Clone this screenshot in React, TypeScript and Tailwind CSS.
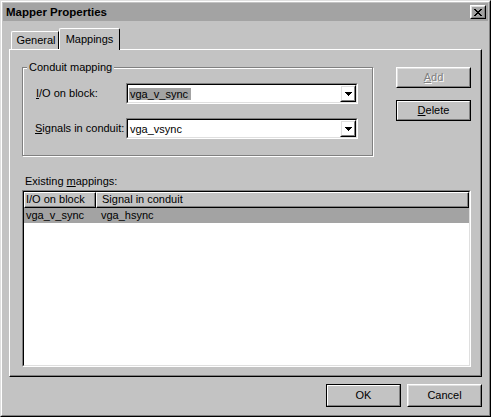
import React from "react";

type Kids = { children?: React.ReactNode };

const closeRows = ["XX....XX", ".XX..XX.", "..XXXX..", "...XX...", "..XXXX..", ".XX..XX.", "XX....XX"];

const CloseGlyph = () => (
  <svg width="8" height="7" shapeRendering="crispEdges">
    {closeRows.flatMap((row, y) =>
      row.split("").map((c, x) =>
        c === "X" ? <rect key={`${x}-${y}`} x={x} y={y} width="1" height="1" fill="#000" /> : null
      )
    )}
  </svg>
);

const Arrow = () => (
  <svg width="7" height="4" shapeRendering="crispEdges">
    <rect x="0" y="0" width="7" height="1" fill="#000" />
    <rect x="1" y="1" width="5" height="1" fill="#000" />
    <rect x="2" y="2" width="3" height="1" fill="#000" />
    <rect x="3" y="3" width="1" height="1" fill="#000" />
  </svg>
);

// raised 3d frame, windows classic style
const Raised = ({ children, className = "" }: Kids & { className?: string }) => (
  <div className={`border border-white border-r-black border-b-black ${className}`}>
    <div className="flex h-full w-full items-center justify-center border border-[#dfdfdf] border-r-[#808080] border-b-[#808080]">
      {children}
    </div>
  </div>
);

const DefaultBtn = ({ children, className = "" }: Kids & { className?: string }) => (
  <div className={`border border-black ${className}`}>
    <div className="flex h-full w-full items-center justify-center border border-white border-r-[#808080] border-b-[#808080]">
      {children}
    </div>
  </div>
);

const U = ({ children }: Kids) => <span className="underline underline-offset-[1px]">{children}</span>;

const Combo = ({ value, selected }: { value: string; selected?: boolean }) => (
  <div className="flex h-[21px] w-[232px] border border-[#808080] border-r-white border-b-white">
    <div className="flex flex-1 items-center border border-black border-r-[#dfdfdf] border-b-[#dfdfdf] bg-white pl-px">
      <span className={selected ? "bg-[#a3a3a3] pl-px pr-[3px] leading-[12px]" : "pl-px leading-[12px]"}>{value}</span>
      <Raised className="ml-auto h-full w-[16px]">
        <Arrow />
      </Raised>
    </div>
  </div>
);

export default function App() {
  return (
    <div className="h-[417px] w-[491px] border border-[#dfdfdf] border-r-black border-b-black bg-[#c3c3c3] font-['Liberation_Sans',Arial,sans-serif] text-[11px] leading-[13px] text-black">
      <div className="flex h-full flex-col border border-white border-r-[#808080] border-b-[#808080] p-px">
        <div className="flex h-[18px] items-center justify-between bg-[#a3a3a3] pl-[3px] pr-[2px]">
          <span className="text-[11.5px] font-bold">Mapper Properties</span>
          <Raised className="h-[14px] w-[16px]">
            <CloseGlyph />
          </Raised>
        </div>

        <div className="flex flex-1 flex-col px-[6px]">
          <div className="mt-[8px] flex h-[20px] items-end pl-[2px]">
            <div className="flex h-[18px] w-[48px] items-center justify-center rounded-tl-[2px] border-t border-l border-r border-white border-r-black pb-px pl-[2px]">
              General
            </div>
            <div className="relative z-10 -mb-px flex h-[22px] w-[61px] items-start justify-center rounded-t-[2px] border-t border-l border-r border-white border-r-black bg-[#c3c3c3] pt-[4px]">
              Mappings
            </div>
          </div>

          <div className="flex h-[328px] flex-col border border-white border-r-black border-b-black pl-[12px] pr-[10px] pt-[17px] shadow-[inset_-1px_-1px_0_#808080]">
            <div className="flex">
              <div className="relative h-[89px] w-[351px] border border-[#808080] shadow-[inset_1px_1px_0_#fff,1px_1px_0_#fff] pl-[13px] pt-[15px]">
                <span className="absolute -top-[7px] left-[4px] bg-[#c3c3c3] px-[2px]">Conduit mapping</span>
                <div className="flex items-center">
                  <span className="w-[90px]">
                    <U>I</U>/O on block:
                  </span>
                  <Combo value="vga_v_sync" selected />
                </div>
                <div className="mt-[14px] flex items-center">
                  <span className="-ml-px w-[91px]">
                    <U>S</U>ignals in conduit:
                  </span>
                  <Combo value="vga_vsync" />
                </div>
              </div>
              <div className="ml-[23px] flex flex-col">
                <Raised className="h-[21px] w-[75px]">
                  <span className="text-[#808080] [text-shadow:1px_1px_0_#fff]">
                    <U>A</U>dd
                  </span>
                </Raised>
                <DefaultBtn className="mt-[12px] h-[21px] w-[75px]">
                  <span>
                    <U>D</U>elete
                  </span>
                </DefaultBtn>
              </div>
            </div>

            <div className="mt-[19px] pl-[3px]">
              Existing <U>m</U>appings:
            </div>
            <div className="mt-[2px] flex h-[177px] flex-col border border-[#808080] border-r-white border-b-white">
              <div className="flex flex-1 flex-col border border-black border-r-[#dfdfdf] border-b-[#dfdfdf] bg-white">
                <div className="flex h-[16px]">
                  <div className="w-[72px] border border-white border-r-black border-b-black shadow-[inset_-1px_-1px_0_#808080] bg-[#c3c3c3] pl-[1px]">
                    I/O on block
                  </div>
                  <div className="flex-1 border border-white border-r-black border-b-black shadow-[inset_-1px_-1px_0_#808080] bg-[#c3c3c3] pl-[5px]">
                    Signal in conduit
                  </div>
                </div>
                <div className="flex h-[15px] items-center bg-[#a3a3a3]">
                  <span className="w-[77px] pl-[2px]">vga_v_sync</span>
                  <span>vga_hsync</span>
                </div>
              </div>
            </div>
          </div>

          <div className="mt-[7px] flex justify-end gap-[6px]">
            <DefaultBtn className="h-[23px] w-[75px]">OK</DefaultBtn>
            <Raised className="h-[23px] w-[75px]">Cancel</Raised>
          </div>
        </div>
      </div>
    </div>
  );
}
